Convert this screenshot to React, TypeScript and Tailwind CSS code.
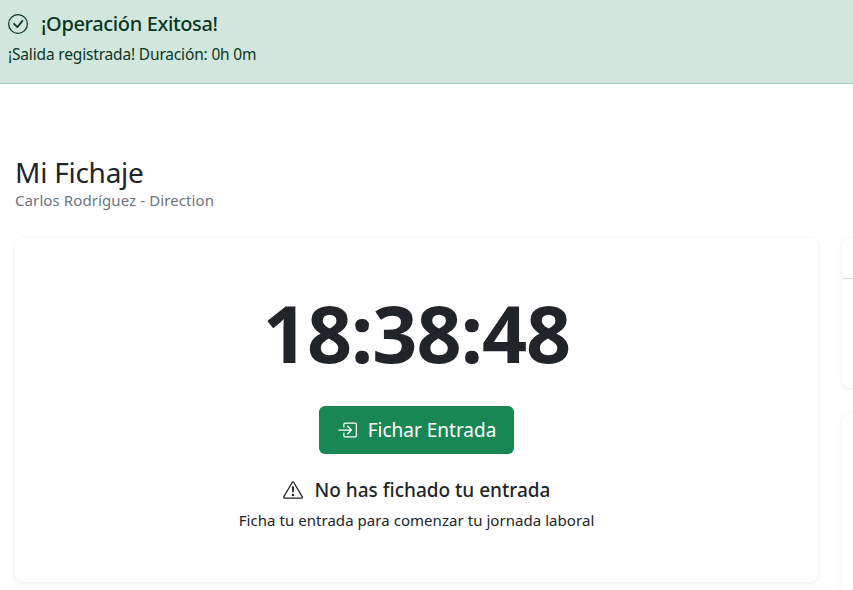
import { BsCheckCircle, BsBoxArrowInRight, BsExclamationTriangle } from 'react-icons/bs';

export default function App() {
  return (
    <div className="h-[590px] w-[853px] overflow-hidden bg-white font-['Noto_Sans',sans-serif] text-[#212529]">
      <div className="h-[84px] border-b border-[#a3cfbb] bg-[#d1e7dd] px-2 pt-[13px] text-[#0a3622]">
        <div className="flex h-[22px] items-center">
          <BsCheckCircle className="h-5 w-5 shrink-0" />
          <h4 className="ml-[13px] text-[20px] leading-[22px] font-medium tracking-[-0.37px]">¡Operación Exitosa!</h4>
        </div>
        <p className="mt-[8px] text-[15.5px] leading-[22px] tracking-[-0.17px]">¡Salida registrada! Duración: 0h 0m</p>
      </div>

      <div className="px-[15px] pt-[71px]">
        <h2 className="text-[28px] leading-[34px] tracking-[-0.25px]">Mi Fichaje</h2>
        <p className="mt-[1px] text-[15px] leading-[21px] tracking-[0.1px] text-[#6c757d]">Carlos Rodríguez - Direction</p>

        <div className="mt-[27px] flex w-[1100px] items-start gap-6">
          <div className="flex h-[344px] w-[803px] shrink-0 flex-col items-center rounded-lg bg-white pt-[47px] shadow-[0_1px_4px_rgba(0,0,0,0.09)]">
            <div className="text-[79px] leading-[96px] font-bold tracking-[-1px]">18:38:48</div>
            <button className="mt-[25px] flex h-12 w-[195px] items-center justify-center gap-[11px] rounded-md bg-[#198754] text-[19px] text-white">
              <BsBoxArrowInRight className="h-5 w-5" />
              <span>Fichar Entrada</span>
            </button>
            <div className="mt-[23px] flex items-center gap-[12px]">
              <BsExclamationTriangle className="h-5 w-5" />
              <h5 className="text-[19px] leading-[26px] font-medium">No has fichado tu entrada</h5>
            </div>
            <p className="mt-[7px] text-[15px] leading-[20px] tracking-[0.05px]">Ficha tu entrada para comenzar tu jornada laboral</p>
          </div>

          <div className="flex w-[250px] shrink-0 flex-col gap-[25px]">
            <div className="h-[150px] rounded-lg bg-white shadow-[0_1px_4px_rgba(0,0,0,0.09)]">
              <div className="h-[41px] border-b border-[#d9d9d9]" />
            </div>
            <div className="h-[200px] rounded-lg bg-white shadow-[0_1px_4px_rgba(0,0,0,0.09)]" />
          </div>
        </div>
      </div>
    </div>
  );
}
